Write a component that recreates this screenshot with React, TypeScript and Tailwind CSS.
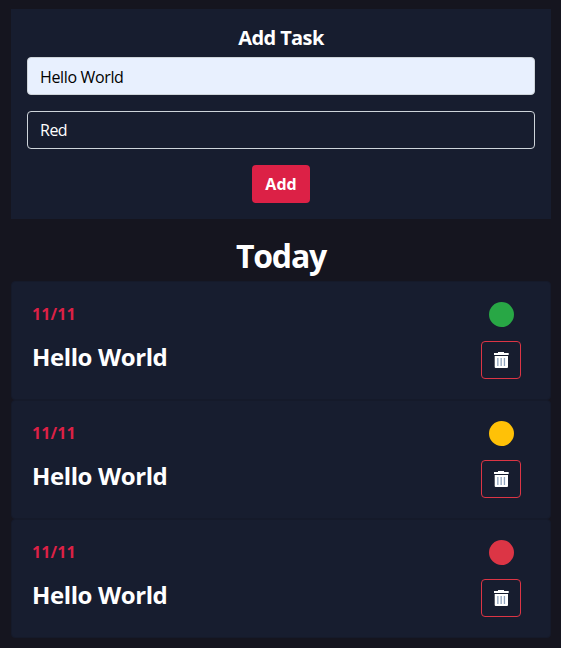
type Task = { id: number; date: string; title: string; dot: string };

const tasks: Task[] = [
  { id: 1, date: "11/11", title: "Hello World", dot: "bg-[#28a745]" },
  { id: 2, date: "11/11", title: "Hello World", dot: "bg-[#ffc107]" },
  { id: 3, date: "11/11", title: "Hello World", dot: "bg-[#dc3545]" },
];

function TrashIcon() {
  return (
    <svg width="16" height="18" viewBox="0 0 16 18" fill="none" aria-hidden="true">
      <path d="M1 2h4V1h6v1h4.7v2H1z" fill="#fff" />
      <path d="M1.7 5H15v11q0 1-1 1H2.7q-1 0-1-1z" fill="#fff" />
      <path d="M4.2 7h1.3v8H4.2zM7.5 7h1.3v8H7.5zM10.8 7h1.3v8h-1.3z" fill="#8fa3bd" />
    </svg>
  );
}

function TaskCard({ task }: { task: Task }) {
  return (
    <li className="flex h-[119px] justify-between rounded-[4px] border border-[#151a2a] bg-[#171d2f] pt-5 pr-[29px] pl-5">
      <div>
        <p className="h-6 text-base leading-6 font-bold tracking-[0.1px] text-[#dc2146]">{task.date}</p>
        <h2 className="mt-3 text-2xl leading-[38px] font-bold tracking-[-0.4px] whitespace-nowrap text-white">{task.title}</h2>
      </div>
      <div className="flex w-10 flex-col items-center">
        <span className={`ml-px size-[25px] shrink-0 rounded-full ${task.dot}`} />
        <button aria-label="Delete task" className="mt-[14px] flex h-[38px] w-10 items-center justify-center rounded-[4px] border border-[#dc3545]">
          <TrashIcon />
        </button>
      </div>
    </li>
  );
}

export default function App() {
  return (
    <main className="h-[648px] overflow-hidden bg-[#15151f] pt-[9px] pr-[10px] pl-[11px] font-['Open_Sans','Noto_Sans',sans-serif]">
      <form className="flex h-[210px] flex-col items-center bg-[#171d2f] px-4 pt-4" onSubmit={(e) => e.preventDefault()}>
        <h1 className="h-8 text-xl leading-[26px] font-bold tracking-[-0.6px] text-white">Add Task</h1>
        <input
          defaultValue="Hello World"
          aria-label="Task"
          className="h-[38px] w-full rounded-[4px] border border-[#ced4da] bg-[#e8f0fe] px-3 pt-0.5 text-base tracking-[-0.35px] text-black outline-none"
        />
        <div className="mt-4 flex h-[38px] w-full items-center rounded-[4px] border border-[#ced4da] px-3 text-base tracking-[-0.5px] text-white">Red</div>
        <button className="mt-4 h-[38px] w-[58px] rounded-[4px] bg-[#dc2146] text-base font-bold text-white">Add</button>
      </form>
      <h1 className="mt-[18px] mb-[6px] text-center text-[32px] leading-[38px] font-bold tracking-[-1.2px] text-white">Today</h1>
      <ul>
        {tasks.map((task) => (
          <TaskCard key={task.id} task={task} />
        ))}
      </ul>
    </main>
  );
}
